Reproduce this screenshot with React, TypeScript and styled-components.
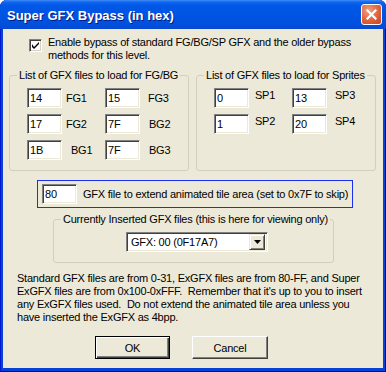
import styled, { createGlobalStyle } from "styled-components";

const GlobalStyle = createGlobalStyle`
  body {
    margin: 0;
    background: #ffffff;
  }
  * {
    box-sizing: border-box;
  }
`;

const StyledWindow = styled.div`
  width: 386px;
  height: 372px;
  display: flex;
  flex-direction: column;
  border-radius: 7px 7px 0 0;
  overflow: hidden;
  background: #0841d6;
  box-shadow: inset 1px 0 #0019cf, inset -1px 0 #00138c, inset 0 -1px #00138c;
  font-family: "Liberation Sans", Arial, sans-serif;
  font-size: 11px;
  letter-spacing: -0.22px;
  color: #000;
`;

const StyledTitleBar = styled.div`
  height: 29px;
  flex-shrink: 0;
  display: flex;
  align-items: center;
  justify-content: space-between;
  padding: 0 4px 0 7px;
  background: linear-gradient(
    to bottom,
    #3d8cf5 0%,
    #0f63ee 8%,
    #0058e6 20%,
    #0054e3 55%,
    #0050dc 85%,
    #0a48cf 100%
  );
  color: #fff;
`;

const StyledTitle = styled.div`
  font-family: "Liberation Sans", Arial, sans-serif;
  font-weight: bold;
  font-size: 13px;
  letter-spacing: 0;
  padding-top: 1px;
  text-shadow: 1px 1px #0a1883;
`;

const StyledClose = styled.div`
  width: 21px;
  height: 21px;
  border: 1px solid #fff;
  border-radius: 3px;
  background: radial-gradient(circle at 35% 30%, #f0a080 0%, #e0623c 55%, #c8421c 100%);
  display: flex;
  align-items: center;
  justify-content: center;
`;

const StyledFrame = styled.div`
  flex: 1;
  display: flex;
  padding: 0 3px 4px;
`;

const StyledBody = styled.div`
  flex: 1;
  background: #ece9d8;
  display: flex;
  flex-direction: column;
`;

const StyledCheckRow = styled.div`
  display: flex;
  align-items: flex-start;
  gap: 6px;
  margin: 7px 0 0 26px;
  line-height: 13px;
  white-space: nowrap;
`;

const StyledCheckbox = styled.div`
  width: 13px;
  height: 13px;
  margin-top: 3px;
  background: #fff;
  border: 1px solid;
  border-color: #808080 #ffffff #ffffff #808080;
  box-shadow: inset 1px 1px #404040, inset -1px -1px #d4d0c8;
  display: flex;
  align-items: center;
  justify-content: center;
`;

const StyledGroupRow = styled.div`
  display: flex;
  gap: 7px;
  margin: 13px 0 0 6px;
`;

const StyledGroupBox = styled.div<{ $width: number; $height: number }>`
  position: relative;
  width: ${(p) => p.$width}px;
  height: ${(p) => p.$height}px;
  border: 1px solid #d0d0bf;
  border-radius: 3px;
`;

const StyledLegend = styled.span`
  position: absolute;
  top: -7px;
  left: 7px;
  padding: 0 2px;
  background: #ece9d8;
  line-height: 13px;
  white-space: nowrap;
`;

const StyledFieldGrid = styled.div`
  display: grid;
  grid-template-columns: 78px 78px;
  row-gap: 6px;
  padding: 12px 0 0 17px;
`;

const StyledField = styled.div`
  display: flex;
  align-items: center;
  height: 20px;
`;

const StyledEdit = styled.input<{ $width?: number }>`
  width: ${(p) => p.$width ?? 35}px;
  height: 20px;
  flex-shrink: 0;
  padding: 0 2px;
  margin: 0;
  background: #fff;
  border: 1px solid;
  border-color: #808080 #ffffff #ffffff #808080;
  box-shadow: inset 1px 1px #404040, inset -1px -1px #ece9d8;
  font-family: "Liberation Sans", Arial, sans-serif;
  font-size: 11px;
  letter-spacing: -0.22px;
  color: #000;
  outline: none;
`;

const StyledFieldLabel = styled.span<{ $gap: number; $lift?: number }>`
  margin-left: ${(p) => p.$gap}px;
  position: relative;
  top: ${(p) => -(p.$lift ?? 0)}px;
`;

const StyledFocusRow = styled.div`
  width: 316px;
  height: 28px;
  margin: 9px 0 0 34px;
  border: 1px solid #1b2ff0;
  display: flex;
  align-items: center;
  gap: 6px;
  padding: 0 0 1px 4px;
  white-space: nowrap;
`;

const StyledCombo = styled.div`
  width: 142px;
  height: 20px;
  margin: 12px 0 0 72px;
  background: #fff;
  border: 1px solid;
  border-color: #808080 #ffffff #ffffff #808080;
  box-shadow: inset 1px 1px #404040, inset -1px -1px #ece9d8;
  display: flex;
  align-items: center;
  justify-content: space-between;
  padding: 2px 2px 2px 4px;
`;

const StyledComboButton = styled.div`
  width: 16px;
  height: 16px;
  background: #ece9d8;
  border: 1px solid;
  border-color: #ece9d8 #404040 #404040 #ece9d8;
  box-shadow: inset 1px 1px #fff, inset -1px -1px #808080;
  display: flex;
  align-items: center;
  justify-content: center;
`;

const StyledNote = styled.p`
  margin: 9px 0 0 14px;
  line-height: 13px;
  white-space: pre;
`;

const StyledButtonRow = styled.div`
  display: flex;
  gap: 22px;
  margin: 12px 0 0 92px;
`;

const StyledButton = styled.button<{ $default?: boolean; $width?: number }>`
  width: ${(p) => p.$width ?? 75}px;
  height: 23px;
  padding: 0;
  background: #ece9d8;
  font-family: "Liberation Sans", Arial, sans-serif;
  font-size: 11px;
  letter-spacing: -0.22px;
  color: #000;
  border: 1px solid;
  border-color: ${(p) =>
    p.$default ? "#000" : "#fff #404040 #404040 #fff"};
  box-shadow: ${(p) =>
    p.$default
      ? "inset 1px 1px #fff, inset -1px -1px #404040, inset -2px -2px #808080"
      : "inset -1px -1px #808080"};
`;

const fgFields = [
  { value: "14", label: "FG1", gap: 4 },
  { value: "15", label: "FG3", gap: 8 },
  { value: "17", label: "FG2", gap: 4 },
  { value: "7F", label: "BG2", gap: 9 },
  { value: "1B", label: "BG1", gap: 9 },
  { value: "7F", label: "BG3", gap: 9 },
];

const spFields = [
  { value: "0", label: "SP1", gap: 6 },
  { value: "13", label: "SP3", gap: 8 },
  { value: "1", label: "SP2", gap: 6 },
  { value: "20", label: "SP4", gap: 8 },
];

const App = () => {
  return (
    <>
      <GlobalStyle />
      <StyledWindow>
        <StyledTitleBar>
          <StyledTitle>Super GFX Bypass (in hex)</StyledTitle>
          <StyledClose>
            <svg width="11" height="11" viewBox="0 0 11 11">
              <path
                d="M1.5 1.5 L9.5 9.5 M9.5 1.5 L1.5 9.5"
                stroke="#fff"
                strokeWidth="2.2"
                strokeLinecap="square"
              />
            </svg>
          </StyledClose>
        </StyledTitleBar>
        <StyledFrame>
          <StyledBody>
            <StyledCheckRow>
              <StyledCheckbox>
                <svg width="7" height="7" viewBox="0 0 7 7">
                  <path d="M0 2 L0 5 L2 7 L7 2 L7 0 L2 5 Z" fill="#000" />
                </svg>
              </StyledCheckbox>
              <span>
                Enable bypass of standard FG/BG/SP GFX and the older bypass
                <br />
                methods for this level.
              </span>
            </StyledCheckRow>

            <StyledGroupRow>
              <StyledGroupBox $width={180} $height={96}>
                <StyledLegend>List of GFX files to load for FG/BG</StyledLegend>
                <StyledFieldGrid>
                  {fgFields.map((f, i) => (
                    <StyledField key={i}>
                      <StyledEdit defaultValue={f.value} readOnly />
                      <StyledFieldLabel $gap={f.gap}>{f.label}</StyledFieldLabel>
                    </StyledField>
                  ))}
                </StyledFieldGrid>
              </StyledGroupBox>
              <StyledGroupBox $width={180} $height={96}>
                <StyledLegend>List of GFX files to load for Sprites</StyledLegend>
                <StyledFieldGrid>
                  {spFields.map((f, i) => (
                    <StyledField key={i}>
                      <StyledEdit defaultValue={f.value} readOnly />
                      <StyledFieldLabel $gap={f.gap} $lift={3}>
                        {f.label}
                      </StyledFieldLabel>
                    </StyledField>
                  ))}
                </StyledFieldGrid>
              </StyledGroupBox>
            </StyledGroupRow>

            <StyledFocusRow>
              <StyledEdit defaultValue="80" readOnly />
              <span>GFX file to extend animated tile area (set to 0x7F to skip)</span>
            </StyledFocusRow>

            <StyledGroupBox $width={281} $height={44} style={{ margin: "11px 0 0 50px" }}>
              <StyledLegend>
                Currently Inserted GFX files (this is here for viewing only)
              </StyledLegend>
              <StyledCombo>
                <span>GFX: 00 (0F17A7)</span>
                <StyledComboButton>
                  <svg width="7" height="4" viewBox="0 0 7 4">
                    <path d="M0 0 L7 0 L3.5 4 Z" fill="#000" />
                  </svg>
                </StyledComboButton>
              </StyledCombo>
            </StyledGroupBox>

            <StyledNote>
              {"Standard GFX files are from 0-31, ExGFX files are from 80-FF, and Super\n" +
                "ExGFX files are from 0x100-0xFFF.  Remember that it's up to you to insert\n" +
                "any ExGFX files used.  Do not extend the animated tile area unless you\n" +
                "have inserted the ExGFX as 4bpp."}
            </StyledNote>

            <StyledButtonRow>
              <StyledButton $default>OK</StyledButton>
              <StyledButton $width={76}>Cancel</StyledButton>
            </StyledButtonRow>
          </StyledBody>
        </StyledFrame>
      </StyledWindow>
    </>
  );
};

export default App;
